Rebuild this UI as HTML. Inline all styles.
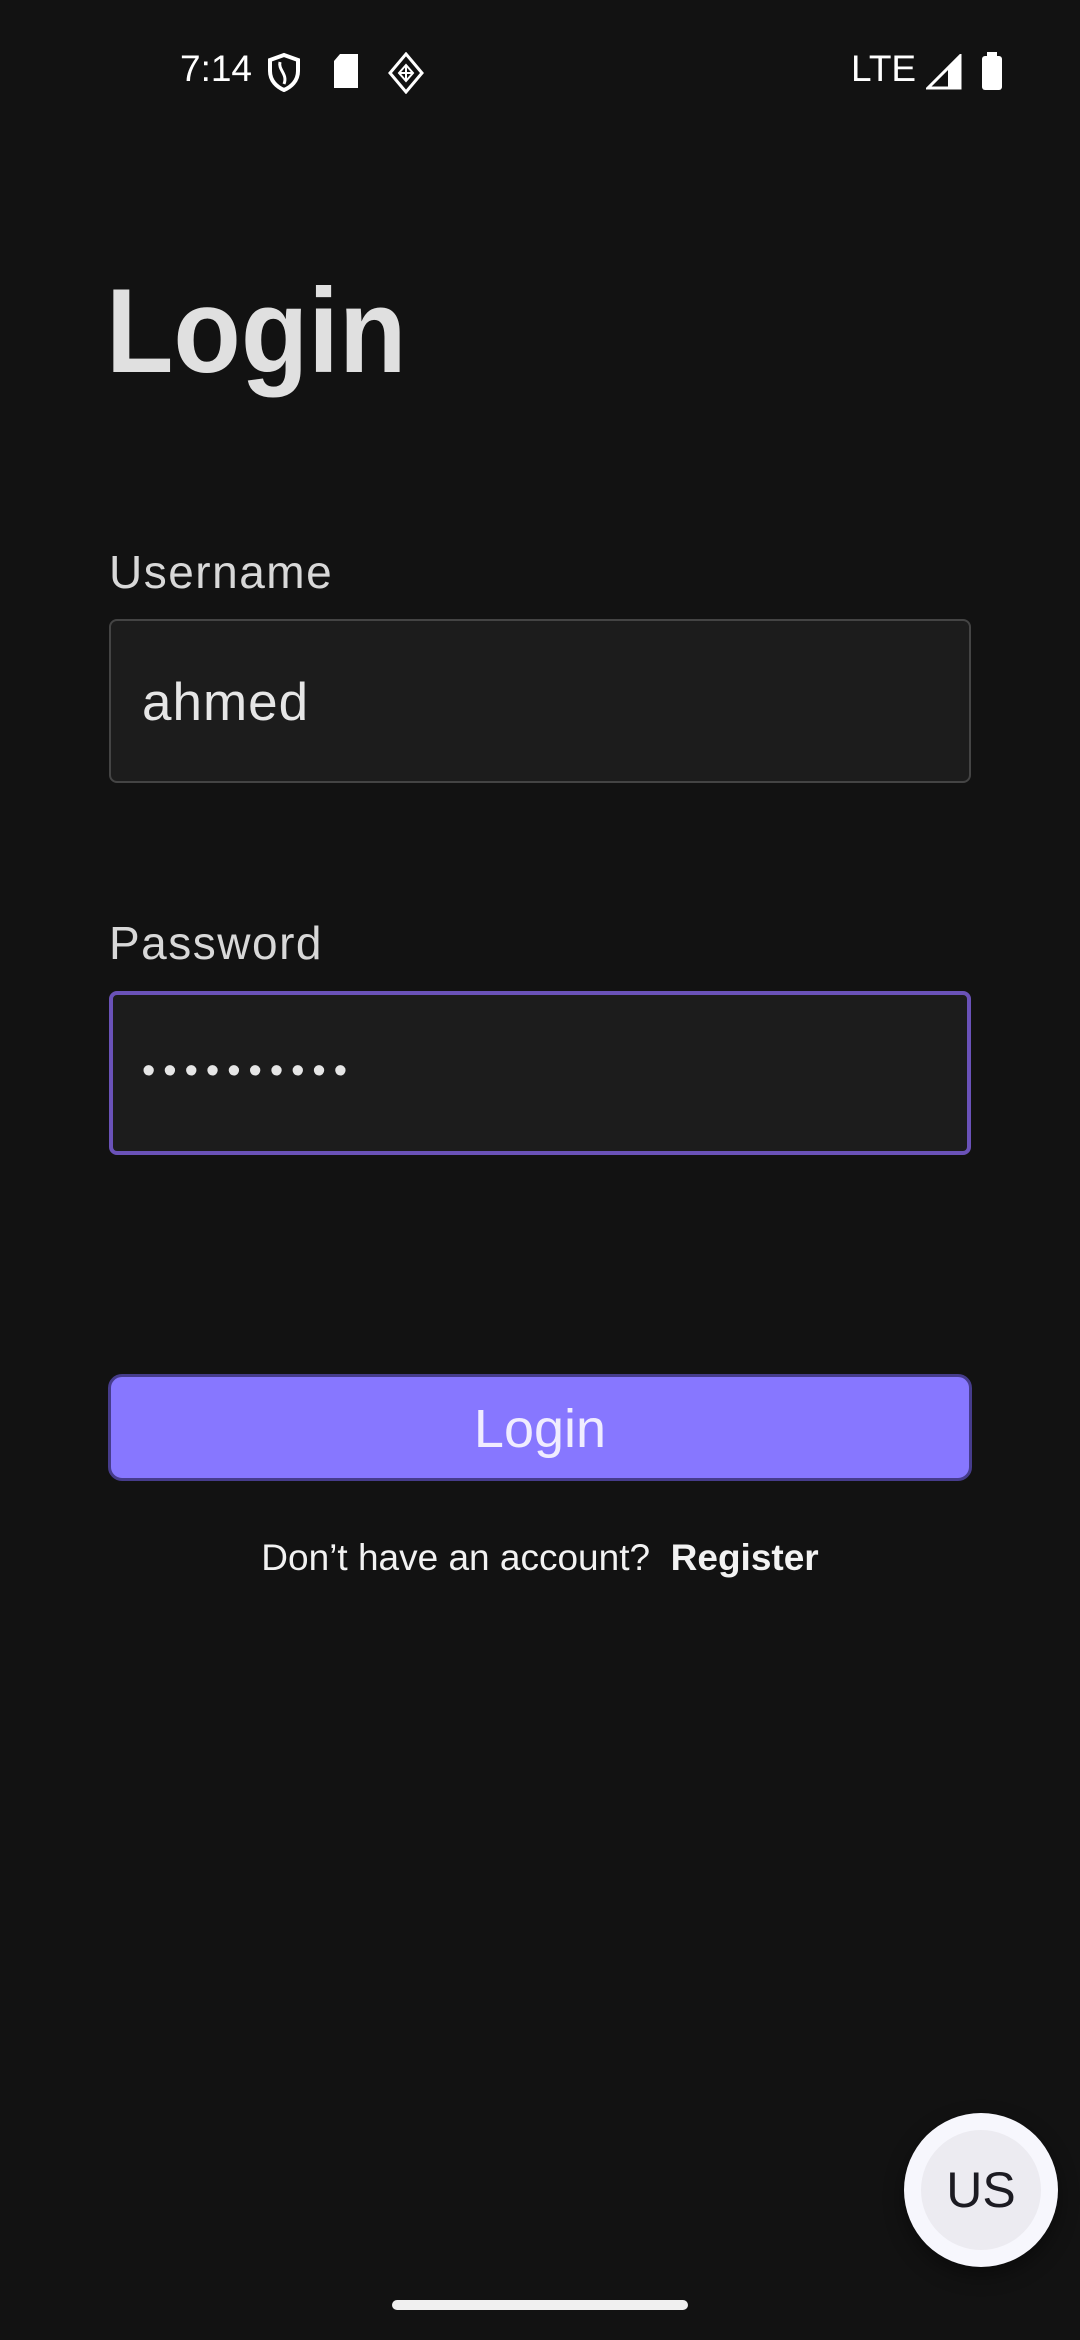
<!DOCTYPE html>
<html><head><meta charset="utf-8"><style>
html,body{margin:0;padding:0;background:#121212;}
body{width:1080px;height:2340px;position:relative;overflow:hidden;font-family:"Liberation Sans",sans-serif;color:#e3e3e3;}
.abs{position:absolute;}
.sb{color:#fff;font-size:37px;top:48px;}
.label{left:109px;font-size:46px;color:#d8d8d8;letter-spacing:1.5px;}
.field{left:109px;width:862px;height:164px;box-sizing:border-box;background:#1c1c1c;border-radius:8px;}
</style></head><body>
<div class="abs sb" style="left:180px;">7:14</div>
<svg class="abs" style="left:266px;top:52px" width="36" height="40" viewBox="0 0 36 40"><path d="M18 3 L32 8 V19 C32 29 25 35 18 38 C11 35 4 29 4 19 V8 Z" fill="none" stroke="#fff" stroke-width="4"/><path d="M14 10 C12 18 22 22 18 32" fill="none" stroke="#fff" stroke-width="3"/></svg>
<svg class="abs" style="left:332px;top:54px" width="28" height="36" viewBox="0 0 28 36"><path d="M8 0 H26 V34 H2 V7 Z" fill="#fff"/></svg>
<svg class="abs" style="left:386px;top:52px" width="40" height="42" viewBox="0 0 40 42"><path d="M20 2 L36 21 L20 40 L4 21 Z" fill="none" stroke="#fff" stroke-width="3"/><path d="M13 21 L20 13 L27 21 L20 29 Z M13 21 H27 M20 13 V29" fill="none" stroke="#fff" stroke-width="2"/></svg>
<div class="abs sb" style="left:851px;">LTE</div>
<svg class="abs" style="left:926px;top:54px" width="36" height="36" viewBox="0 0 36 36"><path d="M34 2 V34 H2 Z" fill="none" stroke="#fff" stroke-width="3"/><path d="M34 2 V34 H22 V14 Z" fill="#fff"/></svg>
<svg class="abs" style="left:980px;top:52px" width="24" height="38" viewBox="0 0 24 38"><rect x="7" y="0" width="10" height="4" fill="#fff"/><rect x="2" y="4" width="20" height="34" rx="3" fill="#fff"/></svg>

<div class="abs" style="left:106px;top:256px;font-size:120px;font-weight:bold;color:#e0e0e0;line-height:150px;transform:scaleX(0.92);transform-origin:0 0;">Login</div>

<div class="abs label" style="top:545px;">Username</div>
<div class="abs field" style="top:619px;border:2px solid #444;"></div>
<div class="abs" style="left:142px;top:672px;font-size:53px;color:#e6e6e6;letter-spacing:1px;">ahmed</div>

<div class="abs label" style="top:916px;">Password</div>
<div class="abs field" style="top:991px;border:4px solid #6a52b8;"></div>
<div class="abs" style="left:142px;top:1050px;font-size:38px;color:#e6e6e6;letter-spacing:8px;">••••••••••</div>

<div class="abs" style="left:108px;top:1374px;width:864px;height:107px;box-sizing:border-box;background:#8777ff;border:3px solid #463c8c;border-radius:14px;text-align:center;line-height:104px;font-size:54px;color:#f0ecff;">Login</div>

<div class="abs" style="left:0;width:1080px;top:1537px;text-align:center;font-size:37px;color:#f2f2f2;">Don’t have an account?&nbsp; <b>Register</b></div>

<div class="abs" style="left:904px;top:2113px;width:154px;height:154px;border-radius:50%;background:#f7f7fd;box-shadow:0 8px 20px rgba(0,0,0,.4);"></div>
<div class="abs" style="left:921px;top:2130px;width:120px;height:120px;border-radius:50%;background:#ecebf1;text-align:center;line-height:120px;font-size:50px;color:#1c1b22;">US</div>

<div class="abs" style="left:392px;top:2300px;width:296px;height:10px;border-radius:5px;background:#f0f0f0;"></div>
</body></html>
